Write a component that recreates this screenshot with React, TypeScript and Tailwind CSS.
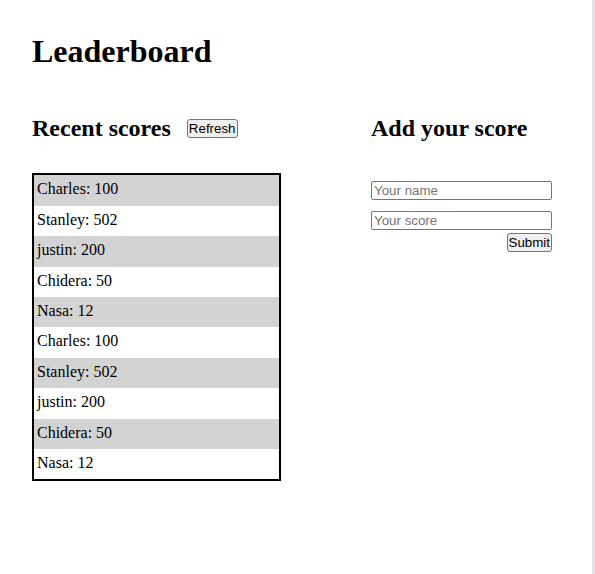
import React from "react";

const scores = [
  "Charles: 100",
  "Stanley: 502",
  "justin: 200",
  "Chidera: 50",
  "Nasa: 12",
  "Charles: 100",
  "Stanley: 502",
  "justin: 200",
  "Chidera: 50",
  "Nasa: 12",
];

export default function App() {
  return (
    <div className="flex w-[595px] min-h-[574px] bg-white text-black font-['Liberation_Serif',serif]">
      <div className="w-[592px] pl-8 pt-[33px]">
        <h1 className="text-[32px] font-bold leading-[36.8px]">Leaderboard</h1>
        <div className="flex mt-[45px]">
          <section className="w-[339px]">
            <div className="flex items-center gap-4">
              <h2 className="text-[24px] font-bold leading-[27.6px]">Recent scores</h2>
              <button className="h-[19px] px-[1px] border border-[#767676] rounded-[3px] bg-[#efefef] text-[13.333px] leading-[15px] font-['Liberation_Sans',Arial,sans-serif] text-black">
                Refresh
              </button>
            </div>
            <ul className="mt-[31px] w-[249px] border-2 border-black">
              {scores.map((s, i) => (
                <li
                  key={i}
                  className={`px-[3px] pt-[5px] pb-[7px] text-[16px] leading-[18.4px] ${i % 2 === 0 ? "bg-[#d3d3d3]" : "bg-white"}`}
                >
                  {s}
                </li>
              ))}
            </ul>
          </section>
          <section className="w-[181px]">
            <h2 className="text-[24px] font-bold leading-[27.6px] whitespace-nowrap">Add your score</h2>
            <form className="mt-[39px] flex flex-col" onSubmit={(e) => e.preventDefault()}>
              <input
                placeholder="Your name"
                className="box-border w-[181px] h-[19px] px-[2px] border border-[#767676] rounded-[2px] text-[13.333px] font-['Liberation_Sans',Arial,sans-serif] placeholder:text-[#757575] outline-none"
              />
              <input
                placeholder="Your score"
                className="mt-[11px] box-border w-[181px] h-[19px] px-[2px] border border-[#767676] rounded-[2px] text-[13.333px] font-['Liberation_Sans',Arial,sans-serif] placeholder:text-[#757575] outline-none"
              />
              <button
                type="submit"
                className="self-end mt-[3px] h-[19px] px-[1px] border border-[#767676] rounded-[3px] bg-[#efefef] text-[13.333px] leading-[15px] font-['Liberation_Sans',Arial,sans-serif] text-black"
              >
                Submit
              </button>
            </form>
          </section>
        </div>
      </div>
      <div className="w-[3px] bg-[#dfe2e6]" />
    </div>
  );
}
